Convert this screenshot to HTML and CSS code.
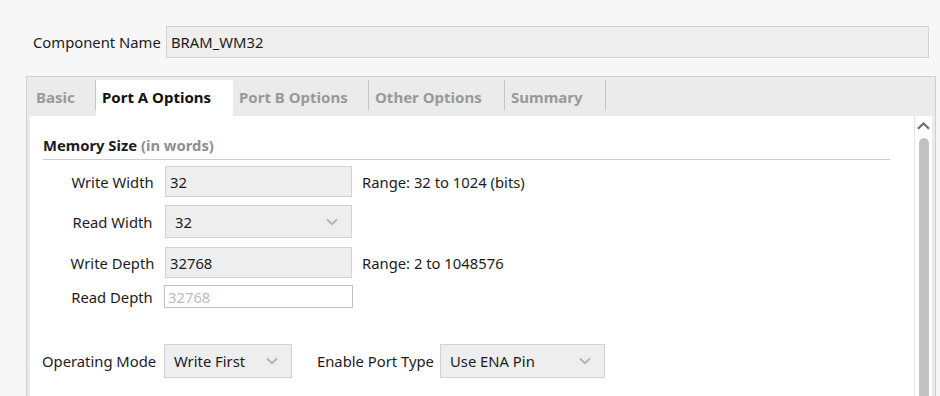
FILE: index.html
```html
<!DOCTYPE html>
<html lang="en">
<head>
    <meta charset="UTF-8">
    <title>Block Memory Generator</title>
    <link rel="stylesheet" href="styles.css">
</head>
<body>
    <div class="name-row">
        <span class="name-label">Component Name</span>
        <div class="field name-field">BRAM_WM32</div>
    </div>

    <div class="panel">
        <!-- Tab strip -->
        <div class="tabs">
            <div class="tab tab-basic">Basic</div>
            <div class="tab tab-wide active">Port A Options</div>
            <div class="tab tab-wide">Port B Options</div>
            <div class="tab tab-wide">Other Options</div>
            <div class="tab tab-summary">Summary</div>
        </div>

        <div class="panel-body">
            <div class="content">
                <div class="section-title">Memory Size <span class="muted">(in words)</span></div>

                <div class="size-rows">
                    <div class="row row-1">
                        <span class="row-label">Write Width</span>
                        <div class="field box">32</div>
                        <span class="range">Range: 32 to 1024 (bits)</span>
                    </div>
                    <div class="row row-2">
                        <span class="row-label">Read Width</span>
                        <div class="field select box">
                            <span>32</span>
                            <svg class="chev" width="12" height="8" viewBox="0 0 12 8"><path d="M1 1.5 L6 6.2 L11 1.5" fill="none" stroke="#b3b3b3" stroke-width="2"/></svg>
                        </div>
                    </div>
                    <div class="row row-3">
                        <span class="row-label">Write Depth</span>
                        <div class="field box">32768</div>
                        <span class="range">Range: 2 to 1048576</span>
                    </div>
                    <div class="row row-4">
                        <span class="row-label">Read Depth</span>
                        <div class="field box readonly">32768</div>
                    </div>
                </div>

                <div class="mode-row">
                    <span class="mode-label">Operating Mode</span>
                    <div class="field select op-select">
                        <span>Write First</span>
                        <svg class="chev" width="12" height="8" viewBox="0 0 12 8"><path d="M1 1.5 L6 6.2 L11 1.5" fill="none" stroke="#b3b3b3" stroke-width="2"/></svg>
                    </div>
                    <span class="mode-label second">Enable Port Type</span>
                    <div class="field select ena-select">
                        <span>Use ENA Pin</span>
                        <svg class="chev" width="12" height="8" viewBox="0 0 12 8"><path d="M1 1.5 L6 6.2 L11 1.5" fill="none" stroke="#b3b3b3" stroke-width="2"/></svg>
                    </div>
                </div>
            </div>

            <!-- Vertical scrollbar -->
            <div class="scrollbar">
                <svg class="scroll-up" width="13" height="8" viewBox="0 0 13 8"><path d="M1 6.8 L6.5 1.5 L12 6.8" fill="none" stroke="#6e6e6e" stroke-width="2.2"/></svg>
                <div class="thumb"></div>
            </div>
        </div>
    </div>
</body>
</html>
```

FILE: styles.css
```css
/* Base */
body {
    margin: 0;
    background-color: #f7f7f7;
    font-family: "Noto Sans", "Open Sans", sans-serif;
    font-size: 14.8px;
    color: #1c1c1c;
    height: 396px;
    overflow: hidden;
}

.field {
    box-sizing: border-box;
    background-color: #eeeeee;
    border: 1px solid #d2d2d2;
    display: flex;
    align-items: center;
    padding-left: 4px;
    white-space: nowrap;
}

/* Component name */
.name-row {
    display: flex;
    align-items: center;
    padding: 26px 0 0 33px;
}
.name-label {
    width: 133px;
}
.name-field {
    width: 763px;
    height: 32px;
    box-shadow: 1px 1px 0 #ffffff;
}

/* Panel with tabs */
.panel {
    box-sizing: border-box;
    margin: 18px 0 0 26px;
    width: 910px;
    height: 320px;
    border: 1px solid #cfcfcf;
    border-bottom: none;
    background-color: #ebebeb;
    padding: 3px 3px 0 3px;
    display: flex;
    flex-direction: column;
}
.tabs {
    display: flex;
    height: 36px;
}
.tab {
    position: relative;
    box-sizing: border-box;
    flex: none;
    height: 36px;
    line-height: 34px;
    font-weight: bold;
    font-size: 15px;
    color: #999999;
    padding-left: 6px;
    white-space: nowrap;
}
.tab-basic { width: 66px; }
.tab-wide { width: 136px; }
.tab-wide.active { width: 137px; }
.tab-summary { width: 101px; }
.tab::after {
    content: "";
    position: absolute;
    right: 0;
    top: 0;
    width: 1px;
    height: 30px;
    background-color: #c6c6c6;
}
.tab.active {
    background-color: #ffffff;
    color: #111111;
}
.tab.active::after {
    display: none;
}

.panel-body {
    flex: 1;
    display: flex;
    background-color: #ffffff;
}
.content {
    flex: 1;
    padding: 19px 24px 0 13px;
}

.section-title {
    font-weight: bold;
    line-height: 20px;
    padding-bottom: 4px;
    border-bottom: 1px solid #cccccc;
}
.muted {
    color: #8e8e8e;
}

/* Memory size rows */
.size-rows {
    padding-left: 17px;
}
.row {
    display: flex;
    align-items: center;
}
.row-label {
    width: 105px;
    text-align: center;
}
.box {
    width: 187px;
}
.row-1 { margin-top: 6px; }
.row-1 .box { height: 31px; }
.row-2 { margin-top: 8px; }
.row-2 .box { height: 33px; padding-left: 9px; }
.row-3 { margin-top: 9px; }
.row-3 .box { height: 31px; }
.row-4 { margin-top: 7px; }
.row-4 .row-label { width: 104px; }
.row-4 .box { height: 23px; width: 189px; }
.box.readonly {
    background-color: #ffffff;
    border-color: #c3c3c3;
    color: #bdbdbd;
    padding-left: 3px;
}
.range {
    margin-left: 10px;
}

.select {
    justify-content: space-between;
    padding-left: 9px;
    padding-right: 13px;
}
.chev {
    display: block;
}

/* Operating mode row */
.mode-row {
    display: flex;
    align-items: center;
    margin-top: 36px;
    margin-left: -1px;
}
.mode-label {
    width: 122px;
    white-space: nowrap;
}
.mode-label.second {
    margin-left: 25px;
    width: 123px;
}
.op-select {
    width: 128px;
    height: 34px;
}
.ena-select {
    width: 165px;
    height: 34px;
}

/* Scrollbar */
.scrollbar {
    width: 17px;
    border-left: 1px solid #e4e4e4;
    display: flex;
    flex-direction: column;
    align-items: center;
}
.scroll-up {
    margin-top: 6px;
}
.thumb {
    margin-top: 8px;
    width: 10px;
    flex: 1;
    background-color: #c2c2c2;
    border-radius: 5px 5px 0 0;
}
```
